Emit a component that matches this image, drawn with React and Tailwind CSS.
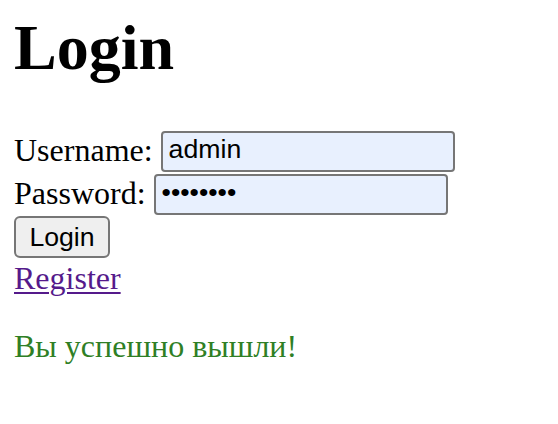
import React, { useState } from 'react';

const App = () => {
  const [username, setUsername] = useState('admin');
  const [password, setPassword] = useState('12345678');

  return (
    <div className="min-h-screen bg-white px-[14px] pt-[12px] text-black font-['Liberation_Serif','Times_New_Roman',serif]">
      <h1 className="text-[64px] font-bold leading-[72px]">Login</h1>

      {/* Form */}
      <form className="mt-[47px] flex flex-col items-start" onSubmit={(e) => e.preventDefault()}>
        <div className="flex items-start gap-2">
          <label className="text-[32px] leading-[38px]">Username:</label>
          <input
            type="text"
            value={username}
            onChange={(e) => setUsername(e.target.value)}
            className="h-[41px] w-[294px] rounded-[4px] border-2 border-[#767676] bg-[#e8f0fe] pl-[6px] pb-[5px] text-[26.667px] leading-[30.6px] font-['Liberation_Sans',Arial,sans-serif] outline-none"
          />
        </div>
        <div className="mt-[2px] flex items-start gap-2">
          <label className="text-[32px] leading-[38px]">Password:</label>
          <input
            type="password"
            value={password}
            onChange={(e) => setPassword(e.target.value)}
            className="h-[41px] w-[294px] rounded-[4px] border-2 border-[#767676] bg-[#e8f0fe] pl-[6px] pb-[5px] text-[26.667px] leading-[30.6px] font-['Liberation_Sans',Arial,sans-serif] outline-none"
          />
        </div>
        <button
          type="submit"
          className="mt-[1px] flex h-[42px] w-[96px] items-center justify-center rounded-[6px] border-2 border-[#767676] bg-[#efefef] text-[26.667px] leading-[30.6px] font-['Liberation_Sans',Arial,sans-serif]"
        >
          Login
        </button>
      </form>

      <a
        href="#register"
        className="mt-[2px] block w-fit text-[32px] leading-[37px] text-[#551a8b] underline decoration-2 underline-offset-[3px]"
      >
        Register
      </a>

      <p className="mt-[31px] text-[32px] leading-[37px] text-[#2f7f25]">Вы успешно вышли!</p>
    </div>
  );
};

export default App;
